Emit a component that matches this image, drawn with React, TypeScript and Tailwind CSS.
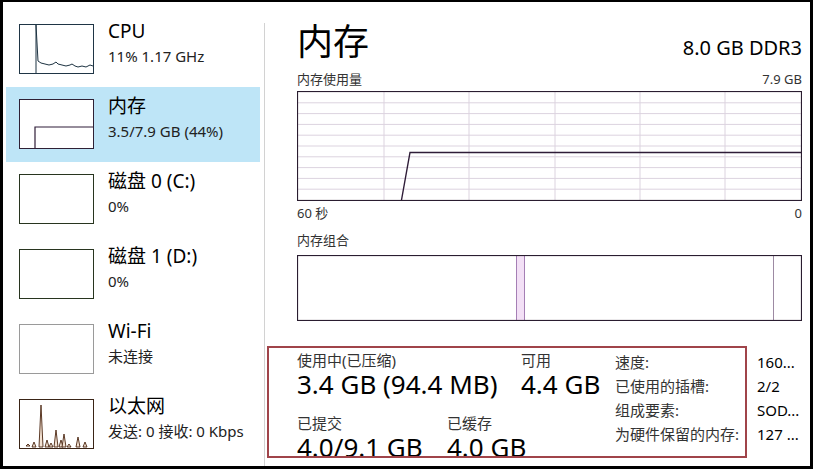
import React from "react";

const FONT = "font-['Noto_Sans','Noto_Sans_CJK_SC',sans-serif]";

type Item = {
  key: string;
  title: string;
  sub: string;
  border: string;
  selected?: boolean;
  graph?: React.ReactNode;
};

function CpuGraph() {
  return (
    <svg width="73" height="48" className="block">
      <polyline
        points="16,48 16,0 17,18 18,36 21,38 25,39 29,40 33,39 36,37 38,39 42,40 46,41 50,40 52,39 55,41 58,42 62,41 66,42 70,40 73,41"
        fill="none"
        stroke="#1d3342"
        strokeWidth="1"
      />
    </svg>
  );
}

function MemGraph() {
  return (
    <svg width="73" height="48" className="block">
      <polyline points="15,48 15,27 73,27" fill="none" stroke="#2f1d38" strokeWidth="1.2" />
    </svg>
  );
}

function NetGraph() {
  const spikes = [
    [8, 44, 46],
    [14, 42, 47],
    [21, 5, 47],
    [27, 40, 47],
    [31, 43, 47],
    [36, 30, 47],
    [41, 40, 47],
    [44, 34, 47],
    [49, 44, 47],
    [58, 37, 47],
    [65, 42, 47],
  ];
  return (
    <svg width="73" height="48" className="block">
      {spikes.map(([x, y, b], i) => (
        <polygon
          key={i}
          points={`${x - 2},${b} ${x},${y} ${x + 2},${b}`}
          fill="#f3e2d3"
          stroke="#4a2510"
          strokeWidth="0.9"
        />
      ))}
    </svg>
  );
}

const ITEMS: Item[] = [
  { key: "cpu", title: "CPU", sub: "11% 1.17 GHz", border: "border-[#1f3545]", graph: <CpuGraph /> },
  {
    key: "mem",
    title: "内存",
    sub: "3.5/7.9 GB (44%)",
    border: "border-[#2f2035]",
    selected: true,
    graph: <MemGraph />,
  },
  { key: "d0", title: "磁盘 0 (C:)", sub: "0%", border: "border-[#28351f]" },
  { key: "d1", title: "磁盘 1 (D:)", sub: "0%", border: "border-[#28351f]" },
  { key: "wifi", title: "Wi-Fi", sub: "未连接", border: "border-[#9a9a9a]" },
  { key: "eth", title: "以太网", sub: "发送: 0 接收: 0 Kbps", border: "border-[#3a2416]", graph: <NetGraph /> },
];

function SideItem({ item }: { item: Item }) {
  return (
    <div
      className={`h-[75px] flex items-start pl-[13px] pt-[12px] ${item.selected ? "bg-[#bee5f7]" : ""}`}
    >
      <div className={`w-[75px] h-[50px] border bg-white shrink-0 ${item.border}`}>{item.graph}</div>
      <div className="ml-[14px] pt-[-4px] -mt-[4px]">
        <div className="text-[19px] leading-[22px] text-black">{item.title}</div>
        <div className="mt-[4px] text-[15px] leading-[20px] text-[#222]">{item.sub}</div>
      </div>
    </div>
  );
}

function UsageGraph() {
  const cols = [87, 172, 258, 343, 428];
  const rows = Array.from({ length: 9 }, (_, i) => 1 + (i + 1) * 10.8);
  return (
    <svg width="505" height="110" className="block">
      {rows.map((y) => (
        <line key={y} x1="1" x2="504" y1={y} y2={y} stroke="#dcd3df" strokeWidth="1" />
      ))}
      {cols.map((x) => (
        <line key={x} x1={x} x2={x} y1="1" y2="109" stroke="#dcd3df" strokeWidth="1" />
      ))}
      <polyline points="104.5,109 113,61.5 504,61.5" fill="none" stroke="#2f1d38" strokeWidth="1.4" />
      <rect x="0.5" y="0.5" width="504" height="109" fill="none" stroke="#2a1d30" strokeWidth="1.2" />
    </svg>
  );
}

function CompositionBar() {
  return (
    <svg width="505" height="66" className="block">
      <rect x="219" y="1" width="9" height="64" fill="#f3e0f6" />
      <line x1="219.5" x2="219.5" y1="1" y2="65" stroke="#a57fb5" strokeWidth="1" />
      <line x1="227.5" x2="227.5" y1="1" y2="65" stroke="#a57fb5" strokeWidth="1" />
      <line x1="476.5" x2="476.5" y1="1" y2="65" stroke="#9d8aa3" strokeWidth="1" />
      <rect x="0.5" y="0.5" width="504" height="65" fill="none" stroke="#2a1d30" strokeWidth="1.2" />
    </svg>
  );
}

function Stat({ label, value, w }: { label: string; value: string; w?: string }) {
  return (
    <div className={w}>
      <div className="text-[15px] leading-[18px] text-[#333]">{label}</div>
      <div className="text-[26px] leading-[30px] text-black">{value}</div>
    </div>
  );
}

const SPECS = [
  ["速度:", "160..."],
  ["已使用的插槽:", "2/2"],
  ["组成要素:", "SOD..."],
  ["为硬件保留的内存:", "127 ..."],
];

export default function App() {
  return (
    <div
      className={`relative w-[813px] h-[469px] bg-white border-black border-t-2 border-l-[3px] border-r-[3px] border-b-[3px] flex overflow-hidden ${FONT}`}
    >
      <div className="w-[261px] pt-[10px] pl-[3px] pr-[4px] flex flex-col shrink-0">
        {ITEMS.map((it) => (
          <SideItem key={it.key} item={it} />
        ))}
      </div>
      <div className="w-px bg-[#d2d2d2] mt-[21px] shrink-0" />
      <div className="flex-1 pl-[32px] pr-[8px] pt-[20px]">
        <div className="flex items-baseline justify-between">
          <div className="text-[36px] leading-[40px] text-black">内存</div>
          <div className="text-[20px] leading-[24px] text-black">8.0 GB DDR3</div>
        </div>
        <div className="mt-[8px] flex justify-between text-[13px] leading-[18px] text-[#333]">
          <span>内存使用量</span>
          <span>7.9 GB</span>
        </div>
        <div className="mt-[3px]">
          <UsageGraph />
        </div>
        <div className="mt-[3px] flex justify-between text-[13px] leading-[18px] text-[#333]">
          <span>60 秒</span>
          <span>0</span>
        </div>
        <div className="mt-[9px] text-[13px] leading-[18px] text-[#333]">内存组合</div>
        <div className="mt-[6px]">
          <CompositionBar />
        </div>
        <div className="mt-[30px] flex">
          <div className="w-[318px] flex flex-col">
            <div className="flex">
              <Stat label="使用中(已压缩)" value="3.4 GB (94.4 MB)" w="w-[224px]" />
              <Stat label="可用" value="4.4 GB" />
            </div>
            <div className="flex mt-[15px]">
              <Stat label="已提交" value="4.0/9.1 GB" w="w-[150px]" />
              <Stat label="已缓存" value="4.0 GB" />
            </div>
          </div>
          <div className="-mt-[1px] flex flex-col text-[15px] leading-[24px]">
            {SPECS.map(([k, v]) => (
              <div key={k} className="flex">
                <span className="w-[142px] text-[#333]">{k}</span>
                <span className="text-black">{v}</span>
              </div>
            ))}
          </div>
        </div>
      </div>
      <div className="absolute left-[264px] top-[344px] w-[480px] h-[112px] border-2 border-[#a0444a] pointer-events-none" />
    </div>
  );
}
